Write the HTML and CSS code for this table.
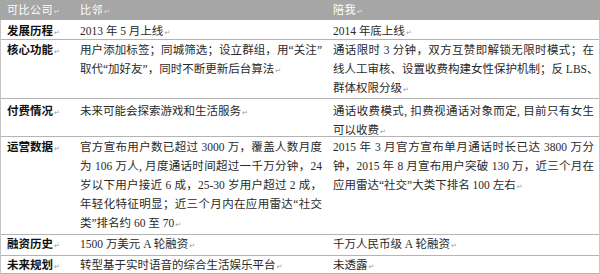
FILE: index.html
```html
<!DOCTYPE html>
<html lang="zh">
<head>
<meta charset="utf-8">
<link rel="stylesheet" href="styles.css">
</head>
<body>
<div class="cmp">
  <div class="row head">
    <div class="cell">可比公司<i>↵</i></div><div class="cell">比邻<i>↵</i></div><div class="cell">陪我<i>↵</i></div>
  </div>
  <div class="row r1">
    <div class="cell lab"><span>发展历程<i>↵</i></span></div>
    <div class="cell"><span>2013 年 5 月上线<i>↵</i></span></div>
    <div class="cell"><span>2014 年底上线<i>↵</i></span></div>
  </div>
  <div class="row r2">
    <div class="cell lab"><span>核心功能<i>↵</i></span></div>
    <div class="cell"><span class="ln">用户添加标签；同城筛选；设立群组，用“关注”</span><span>取代“加好友”，同时不断更新后台算法<i>↵</i></span></div>
    <div class="cell"><span class="ln">通话限时 3 分钟，双方互赞即解锁无限时模式；在</span><span class="ln">线人工审核、设置收费构建女性保护机制；反 LBS、</span><span>群体权限分级<i>↵</i></span></div>
  </div>
  <div class="row r3">
    <div class="cell lab"><span>付费情况<i>↵</i></span></div>
    <div class="cell"><span>未来可能会探索游戏和生活服务<i>↵</i></span></div>
    <div class="cell"><span class="ln">通话收费模式, 扣费视通话对象而定, 目前只有女生</span><span>可以收费<i>↵</i></span></div>
  </div>
  <div class="row r4">
    <div class="cell lab"><span>运营数据<i>↵</i></span></div>
    <div class="cell"><span class="ln">官方宣布用户数已超过 3000 万，覆盖人数月度</span><span class="ln">为 106 万人, 月度通话时间超过一千万分钟，24</span><span class="ln">岁以下用户接近 6 成，25-30 岁用户超过 2 成，</span><span class="ln">年轻化特征明显；近三个月内在应用雷达“社交</span><span>类”排名约 60 至 70<i>↵</i></span></div>
    <div class="cell"><span class="ln">2015 年 3 月官方宣布单月通话时长已达 3800 万分</span><span class="ln">钟，2015 年 8 月宣布用户突破 130 万，近三个月在</span><span>应用雷达“社交”大类下排名 100 左右<i>↵</i></span></div>
  </div>
  <div class="row r5">
    <div class="cell lab"><span>融资历史<i>↵</i></span></div>
    <div class="cell"><span>1500 万美元 A 轮融资<i>↵</i></span></div>
    <div class="cell"><span>千万人民币级 A 轮融资<i>↵</i></span></div>
  </div>
  <div class="row r6">
    <div class="cell lab"><span>未来规划<i>↵</i></span></div>
    <div class="cell"><span>转型基于实时语音的综合生活娱乐平台<i>↵</i></span></div>
    <div class="cell"><span>未透露<i>↵</i></span></div>
  </div>
</div>
</body>
</html>
```
FILE: styles.css
```css
html, body {
  margin: 0;
  padding: 0;
  background: #ffffff;
}
.cmp {
  width: 598px;
  font-family: "Liberation Serif", "Noto Sans CJK SC", serif;
  font-size: 11.5px;
  line-height: 19px;
  color: #2a2a2a;
  border-left: 1px solid #c4c4c4;
  border-right: 1px solid #c8c8c8;
}
.row {
  display: grid;
  grid-template-columns: 72px 253px 272px;
  box-sizing: border-box;
  border-bottom: 1px solid #b4b4b4;
  overflow: hidden;
}
.row.head {
  background: #a6a6a6;
  color: #ffffff;
  height: 20px;
  border-bottom: none;
  margin-left: -1px;
  margin-right: -1px;
  grid-template-columns: 73px 253px 274px;
}
.head .cell {
  font-size: 11px;
  line-height: 20px;
  padding-left: 7px;
  letter-spacing: 0.5px;
}
.cell {
  box-sizing: border-box;
  padding: 0 4px 0 7px;
  min-width: 0;
}
.cell.lab {
  padding-left: 6px;
  font-weight: 700;
  color: #111111;
}
.cell span {
  display: block;
  height: 19px;
  white-space: nowrap;
}
.cell span.ln {
  text-align: justify;
  text-align-last: justify;
}
.cmp i {
  font-style: normal;
  font-weight: 400;
  font-family: "DejaVu Sans", sans-serif;
  font-size: 7px;
  color: #9a9a9a;
  margin-left: 1px;
  letter-spacing: 0;
}
.head i { color: #e2e2e2; }
.r1 { height: 20px; padding-top: 2px; }
.r2 { height: 59px; padding-top: 1px; }
.r3 { height: 38px; padding-top: 3px; }
.r4 { height: 98px; padding-top: 1px; }
.r5 { height: 21px; padding-top: 0; }
.r6 { height: 18px; padding-top: 0; }
```
